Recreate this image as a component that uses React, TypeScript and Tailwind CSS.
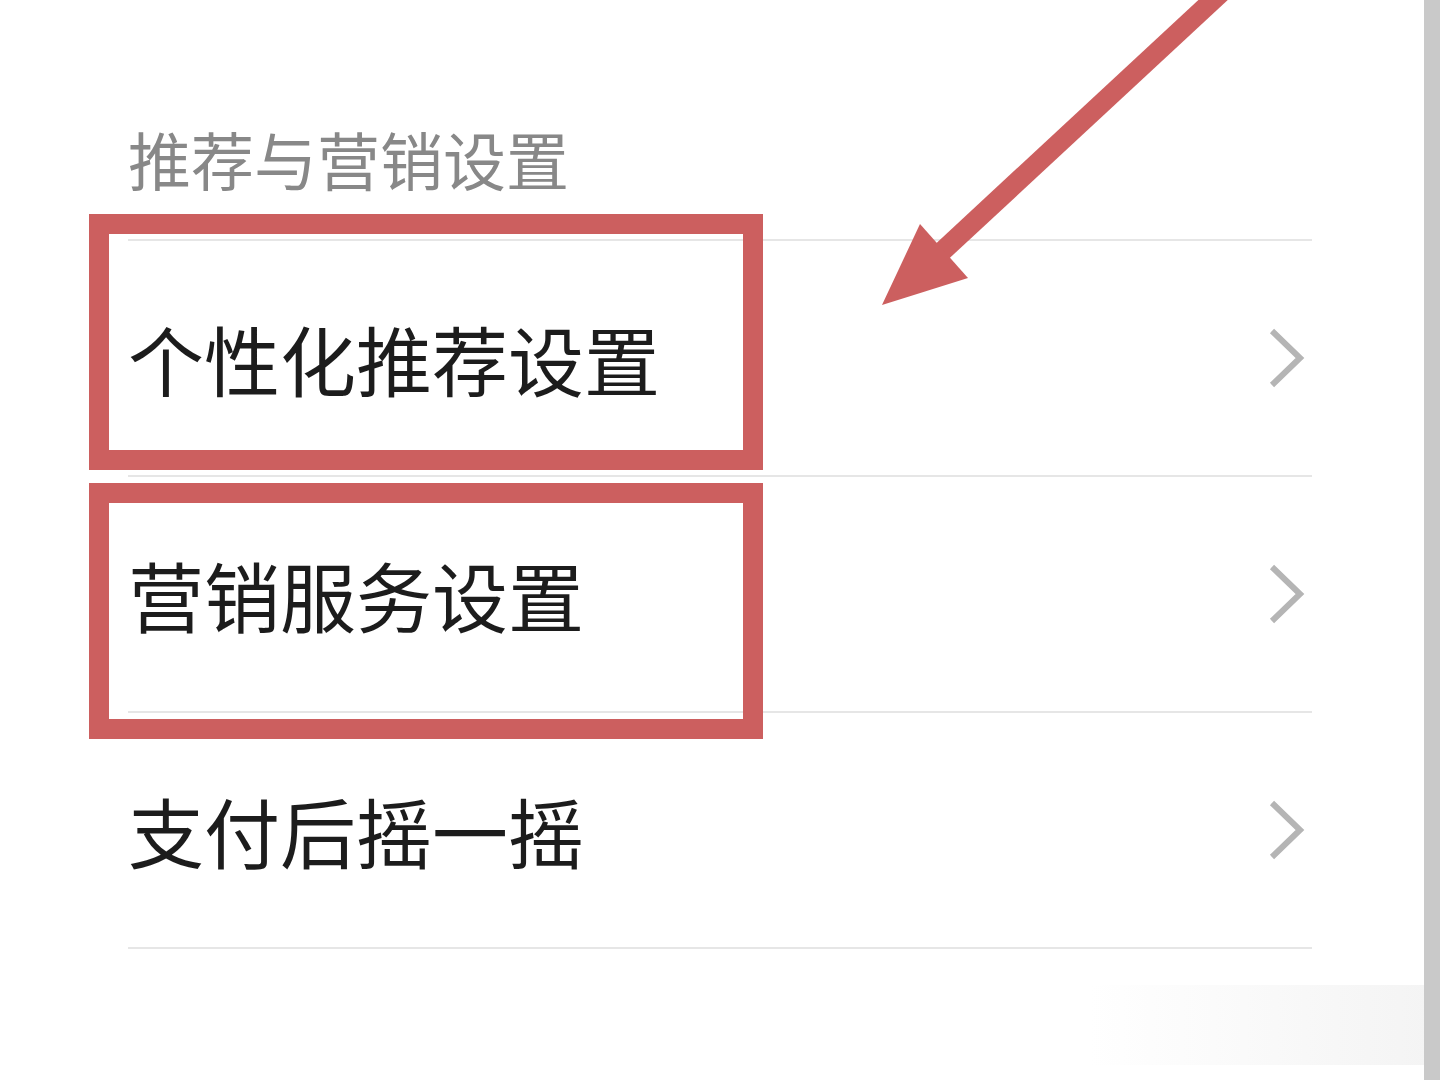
import React from 'react';

const rows = ['个性化推荐设置', '营销服务设置', '支付后摇一摇'];

const Chevron = () => (
  <svg width="40" height="60" viewBox="0 0 40 60" fill="none">
    <polyline points="6,3 34,30 6,57" stroke="#b5b5b5" strokeWidth="6" strokeLinejoin="miter" />
  </svg>
);

const App = () => {
  return (
    <div
      className="relative flex w-[1440px] h-[1080px] overflow-hidden bg-white"
      style={{ fontFamily: '"Noto Sans CJK SC", "Noto Sans", sans-serif' }}
    >
      <div className="flex-1 pl-[128px] pr-[112px]">
        <div className="pt-[126px] text-[63px] leading-none text-[#888888] mb-[50px]">
          推荐与营销设置
        </div>
        <div className="border-t-2 border-[#e6e6e6]">
          {rows.map((label) => (
            <div
              key={label}
              className="flex items-center justify-between h-[236px] border-b-2 border-[#e6e6e6] pr-[6px]"
            >
              <span className="text-[76px] leading-none text-[#1c1c1c]">{label}</span>
              <Chevron />
            </div>
          ))}
        </div>
      </div>
      <div className="w-[16px] bg-[#c9c9c9]" />

      {/* annotation boxes */}
      <div className="absolute left-[89px] top-[214px] w-[674px] h-[256px] border-[20px] border-[#cc5f5f]" />
      <div className="absolute left-[89px] top-[483px] w-[674px] h-[256px] border-[20px] border-[#cc5f5f]" />

      {/* arrow */}
      <svg className="absolute left-0 top-0" width="1440" height="1080" viewBox="0 0 1440 1080">
        <line x1="1226" y1="-12" x2="935" y2="258" stroke="#cc5f5f" strokeWidth="20" />
        <polygon points="882,305 920,224 968,278" fill="#cc5f5f" />
      </svg>

      {/* faint shadow bottom right */}
      <div className="absolute left-[1090px] top-[985px] w-[334px] h-[80px] bg-gradient-to-r from-white to-[#ededed] opacity-60" />
    </div>
  );
};

export default App;
